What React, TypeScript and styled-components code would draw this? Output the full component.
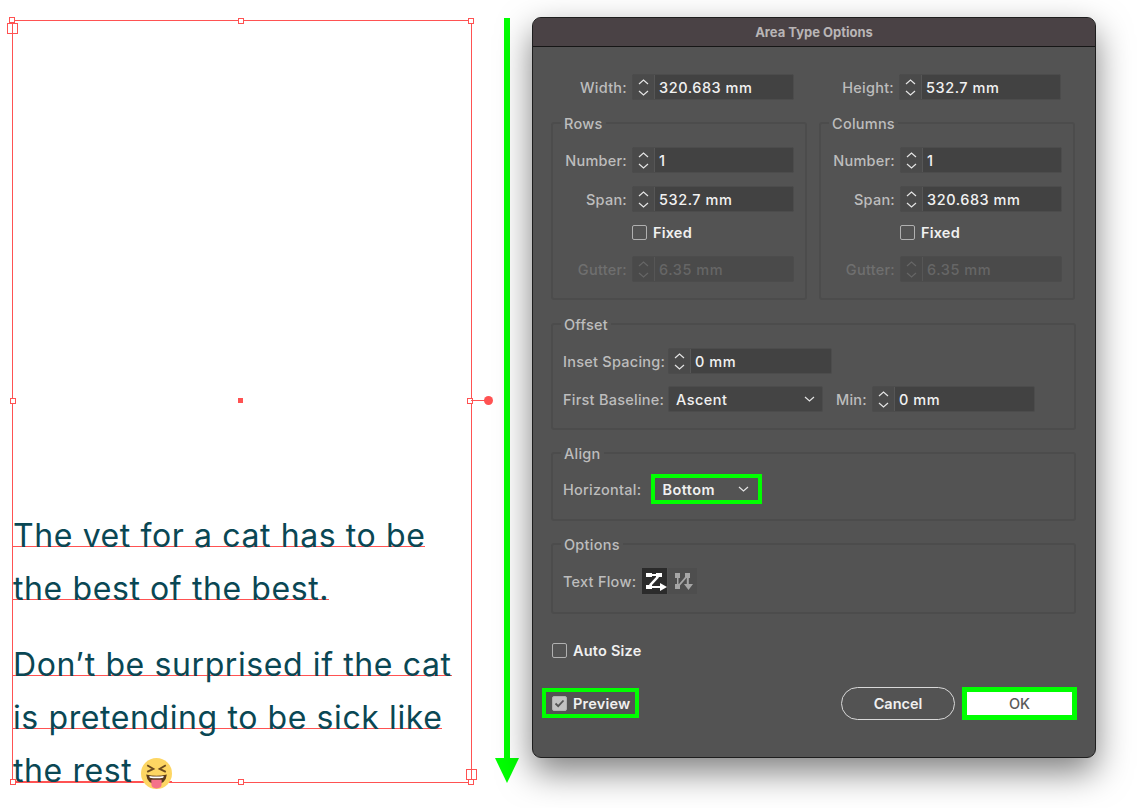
// global modules
import styled, { createGlobalStyle } from 'styled-components';

const GlobalStyle = createGlobalStyle`
  html, body {
    margin: 0;
    background: #fff;
  }
  body {
    font-family: Inter, "Liberation Sans", sans-serif;
  }
`;

const RED = '#ff5252';
const GREEN = '#00ff00';

const Page = styled.div`
  width: 1137px;
  height: 808px;
  display: flex;
  align-items: flex-start;
  overflow: hidden;
`;

/* artboard on the left */
const Frame = styled.div`
  position: relative;
  flex: none;
  box-sizing: border-box;
  width: 460px;
  height: 763px;
  margin: 20px 0 0 12px;
  border: 1px solid ${RED};
  display: flex;
  flex-direction: column;
  justify-content: flex-end;
  gap: 23px;
  color: #0a4754;
  font-size: 32px;
`;

const Paragraph = styled.div`
  display: flex;
  flex-direction: column;
  align-items: flex-start;
`;

const Line = styled.div`
  box-sizing: border-box;
  height: 53px;
  border-bottom: 1px solid ${RED};
  line-height: 84px;
  white-space: nowrap;
  letter-spacing: 0.6px;
`;

const Handle = styled.span<{ $x: number; $y: number; $size?: number; $fill?: boolean }>`
  position: absolute;
  box-sizing: border-box;
  left: ${(p) => p.$x}px;
  top: ${(p) => p.$y}px;
  width: ${(p) => p.$size ?? 6}px;
  height: ${(p) => p.$size ?? 6}px;
  border: 1px solid ${RED};
  background: ${(p) => (p.$fill ? RED : '#fff')};
`;

const Port = styled(Handle)`
  background: transparent;
`;

const Connector = styled.span`
  position: absolute;
  left: 458px;
  top: 379px;
  width: 14px;
  height: 1px;
  background: ${RED};
`;

const ConnectorDot = styled.span`
  position: absolute;
  left: 471px;
  top: 375px;
  width: 9px;
  height: 9px;
  border-radius: 50%;
  background: ${RED};
`;

const Arrow = styled.svg`
  flex: none;
  width: 26px;
  height: 766px;
  margin: 18px 0 0 22px;
`;

/* dialog */
const Dialog = styled.div`
  flex: none;
  box-sizing: border-box;
  width: 564px;
  height: 741px;
  margin: 17px 0 0 12px;
  border: 1px solid #1e1e1e;
  border-radius: 9px;
  background: #535353;
  box-shadow: 0 14px 34px rgba(0, 0, 0, 0.5);
  display: flex;
  flex-direction: column;
  overflow: hidden;
`;

const TitleBar = styled.div`
  flex: none;
  height: 28px;
  border-bottom: 1px solid #161616;
  background: #4a4245;
  color: #b9b5b6;
  font-size: 13px;
  font-weight: 700;
  line-height: 28px;
  text-align: center;
`;

const Body = styled.div`
  padding: 27px 19px 0 18px;
  display: flex;
  flex-direction: column;
`;

const TwoCols = styled.div`
  display: grid;
  grid-template-columns: 256px 256px;
  column-gap: 12px;
`;

const Group = styled.fieldset<{ $top?: number; $pad: string }>`
  box-sizing: border-box;
  min-width: 0;
  margin: ${(p) => p.$top ?? 0}px 0 0;
  padding: ${(p) => p.$pad};
  border: 2px solid #4c4c4c;
  border-radius: 3px;
`;

const Legend = styled.legend`
  height: 18px;
  margin-left: 8px;
  padding: 0 3px;
  color: #bdbdbd;
  font-size: 14.5px;
  font-weight: 500;
  line-height: 20px;
  letter-spacing: 0.25px;
`;

const Stack = styled.div<{ $gap: number }>`
  display: flex;
  flex-direction: column;
  gap: ${(p) => p.$gap}px;
`;

const Inset = styled.div`
  padding-left: 10px;
`;

const Row = styled.div<{ $gap?: number }>`
  display: flex;
  align-items: center;
  gap: ${(p) => p.$gap ?? 0}px;
`;

const Label = styled.label<{ $width?: number; $faded?: boolean; $left?: boolean }>`
  flex: none;
  width: ${(p) => (p.$width ? `${p.$width}px` : 'auto')};
  color: ${(p) => (p.$faded ? '#6f6f6f' : '#bdbdbd')};
  font-size: 14.5px;
  font-weight: 500;
  letter-spacing: 0.25px;
  text-align: ${(p) => (p.$left ? 'left' : 'right')};
  white-space: nowrap;
`;

const FieldBox = styled.div<{ $width: number; $faded?: boolean }>`
  flex: none;
  box-sizing: border-box;
  width: ${(p) => p.$width}px;
  height: 26px;
  margin-left: 5px;
  display: flex;
  border: 1px solid #4c4c4c;
  border-radius: 2px;
  background: ${(p) => (p.$faded ? '#4a4a4a' : '#424242')};
`;

const Stepper = styled.span`
  flex: none;
  width: 21px;
  border-right: 1px solid #565656;
  background: #4a4a4a;
  display: flex;
  flex-direction: column;
  align-items: center;
  justify-content: center;
  gap: 5px;
`;

const Value = styled.span<{ $faded?: boolean }>`
  padding-left: 4px;
  color: ${(p) => (p.$faded ? '#666' : '#f1f1f1')};
  font-size: 14.5px;
  font-weight: 500;
  line-height: 25px;
  letter-spacing: 0.55px;
  white-space: nowrap;
`;

const Dropdown = styled.div<{ $width: number }>`
  flex: none;
  box-sizing: border-box;
  width: ${(p) => p.$width}px;
  height: 26px;
  margin-left: 5px;
  padding: 0 7px;
  display: flex;
  align-items: center;
  justify-content: space-between;
  border: 1px solid #4c4c4c;
  border-radius: 2px;
  background: #444;
  color: #f1f1f1;
  font-size: 14.5px;
  font-weight: 500;
  letter-spacing: 0.45px;
`;

const GreenSelect = styled(Dropdown)`
  height: 30px;
  margin-left: 10px;
  padding: 0 9px 0 7px;
  border: 4px solid ${GREEN};
  border-radius: 0;
  background: #535353;
  font-weight: 600;
`;

const Box = styled.span<{ $checked?: boolean }>`
  flex: none;
  box-sizing: border-box;
  width: 15px;
  height: 15px;
  border: 1px solid #b0b0b0;
  border-radius: 2px;
  background: ${(p) => (p.$checked ? '#c2c2c2' : 'transparent')};
  display: flex;
  align-items: center;
  justify-content: center;
`;

const CheckLabel = styled.span`
  color: #f0f0f0;
  font-size: 14.5px;
  font-weight: 600;
  letter-spacing: 0.2px;
  white-space: nowrap;
`;

const FixedRow = styled(Row)`
  height: 20px;
  margin: -3px 0 1px 79px;
  gap: 6px;
`;

const FlowGroup = styled(Row)`
  margin-left: 6px;
  gap: 1px;
`;

const FlowButton = styled.span<{ $active?: boolean }>`
  flex: none;
  width: ${(p) => (p.$active ? 25 : 29)}px;
  height: 26px;
  background: ${(p) => (p.$active ? '#2b2b2b' : '#4e4e4e')};
  display: flex;
`;

const AutoSize = styled(Row)`
  height: 18px;
  margin: 27px 0 0 1px;
  gap: 6px;
`;

const Footer = styled.div`
  margin-top: 28px;
  margin-right: -1px;
  display: flex;
  align-items: flex-start;
  justify-content: space-between;
`;

const PreviewBox = styled(Row)`
  box-sizing: border-box;
  width: 97px;
  height: 30px;
  margin: 1px 0 0 -9px;
  padding-left: 6px;
  gap: 6px;
  border: 4px solid ${GREEN};
`;

const Buttons = styled.div`
  display: flex;
  gap: 7px;
`;

const CancelButton = styled.button`
  box-sizing: border-box;
  width: 114px;
  height: 33px;
  padding: 0;
  border: 1px solid #d8d8d8;
  border-radius: 17px;
  background: transparent;
  color: #f0f0f0;
  font: 600 14.5px Inter, "Liberation Sans", sans-serif;
`;

const OkButton = styled.button`
  box-sizing: border-box;
  width: 115px;
  height: 33px;
  padding: 0;
  border: 5px solid ${GREEN};
  background: #fff;
  color: #5a5a5a;
  font: 500 14.5px Inter, "Liberation Sans", sans-serif;
`;

const Chevron = ({ up, color = '#e4e4e4' }: { up?: boolean; color?: string }) => (
  <svg width="11" height="6" viewBox="0 0 11 6" fill="none">
    <path
      d={up ? 'M1 5 L5.5 1 L10 5' : 'M1 1 L5.5 5 L10 1'}
      stroke={color}
      strokeWidth="1.2"
    />
  </svg>
);

interface FieldProps {
  label: string;
  value: string;
  labelWidth: number;
  width: number;
  faded?: boolean;
  left?: boolean;
}

const Field = ({ label, value, labelWidth, width, faded, left }: FieldProps) => (
  <Row>
    <Label $width={labelWidth} $faded={faded} $left={left}>
      {label}
    </Label>
    <FieldBox $width={width} $faded={faded}>
      <Stepper>
        <Chevron up color={faded ? '#666' : undefined} />
        <Chevron color={faded ? '#666' : undefined} />
      </Stepper>
      <Value $faded={faded}>{value}</Value>
    </FieldBox>
  </Row>
);

const DimensionGroup = ({ title, span }: { title: string; span: string }) => (
  <Group $top={14} $pad="15px 0 16px 0">
    <Legend>{title}</Legend>
    <Stack $gap={13}>
      <Field label="Number:" value="1" labelWidth={74} width={162} />
      <Field label="Span:" value={span} labelWidth={74} width={162} />
      <FixedRow>
        <Box />
        <CheckLabel>Fixed</CheckLabel>
      </FixedRow>
      <Field label="Gutter:" value="6.35 mm" labelWidth={74} width={162} faded />
    </Stack>
  </Group>
);

const TongueEmoji = () => (
  <svg
    width="31"
    height="31"
    viewBox="0 0 30 30"
    style={{ verticalAlign: '-7px', marginLeft: '-1px' }}
  >
    <circle cx="15" cy="15" r="15" fill="#fdd663" />
    <path
      d="M6 7 L12 10.5 L6 13.5 M24 7 L18 10.5 L24 13.5"
      fill="none"
      stroke="#6b4a1e"
      strokeWidth="1.8"
    />
    <path d="M5 16 Q15 18.5 25 16 Q24 25 15 25.5 Q6 25 5 16 Z" fill="#5a3a1a" />
    <path d="M8 17.4 Q15 18.6 22 17.4 L21.5 19 Q15 20 8.5 19 Z" fill="#fff" />
    <path d="M10 21 H20 V25 Q20 29.5 15 29.5 Q10 29.5 10 25 Z" fill="#f4728a" />
  </svg>
);

const FlowAcross = () => (
  <svg width="25" height="26" viewBox="0 0 25 26" fill="#fff">
    <rect x="4" y="5" width="6" height="4" />
    <rect x="14" y="5" width="6" height="4" />
    <rect x="10" y="6" width="4" height="2" />
    <path d="M15 8 L17 9.5 L9 18 L7 16.5 Z" />
    <rect x="4" y="17" width="6" height="4" />
    <rect x="10" y="18" width="9" height="2" />
    <path d="M18 15 L25 19 L18 23 Z" />
  </svg>
);

const FlowDown = () => (
  <svg width="29" height="26" viewBox="0 0 29 26" fill="#a6a6a6">
    <rect x="7" y="5" width="5" height="5" />
    <rect x="9" y="10" width="1.5" height="6" />
    <rect x="7" y="16" width="5" height="5" />
    <path d="M11 16 L17 9 L18.5 10 L12 17.5 Z" />
    <rect x="17" y="5" width="5" height="5" />
    <rect x="18.8" y="10" width="2" height="6" />
    <path d="M16 16 H25 L20.5 22 Z" />
  </svg>
);

export default function App() {
  return (
    <Page>
      <GlobalStyle />

      <Frame>
        <Paragraph>
          <Line>The vet for a cat has to be</Line>
          <Line>the best of the best.</Line>
        </Paragraph>
        <Paragraph>
          <Line>Don’t be surprised if the cat</Line>
          <Line>is pretending to be sick like</Line>
          <Line>
            the rest <TongueEmoji />
          </Line>
        </Paragraph>

        <Handle $x={-4} $y={-4} />
        <Handle $x={225} $y={-3} />
        <Handle $x={455} $y={-3} />
        <Handle $x={-3} $y={377} />
        <Handle $x={225} $y={377} $size={5} $fill />
        <Handle $x={454} $y={377} />
        <Handle $x={-3} $y={758} />
        <Handle $x={225} $y={758} />
        <Handle $x={455} $y={758} />
        <Port $x={-6} $y={2} $size={11} />
        <Port $x={453} $y={748} $size={11} />
        <Connector />
        <ConnectorDot />
      </Frame>

      <Arrow viewBox="0 0 26 766">
        <rect x="10" y="0" width="6" height="742" fill={GREEN} />
        <path d="M1 740 H25 L13 765 Z" fill={GREEN} />
      </Arrow>

      <Dialog>
        <TitleBar>Area Type Options</TitleBar>
        <Body>
          <TwoCols>
            <Field label="Width:" value="320.683 mm" labelWidth={76} width={162} />
            <Field label="Height:" value="532.7 mm" labelWidth={75} width={162} />
          </TwoCols>

          <TwoCols>
            <DimensionGroup title="Rows" span="532.7 mm" />
            <DimensionGroup title="Columns" span="320.683 mm" />
          </TwoCols>

          <Group $top={15} $pad="15px 0 16px">
            <Legend>Offset</Legend>
            <Inset>
              <Stack $gap={12}>
                <Field label="Inset Spacing:" value="0 mm" labelWidth={100} width={164} left />
                <Row>
                  <Label $width={100} $left>
                    First Baseline:
                  </Label>
                  <Dropdown $width={155}>
                    Ascent
                    <Chevron />
                  </Dropdown>
                  <Label $width={44}>Min:</Label>
                  <FieldBox $width={163}>
                    <Stepper>
                      <Chevron up />
                      <Chevron />
                    </Stepper>
                    <Value>0 mm</Value>
                  </FieldBox>
                </Row>
              </Stack>
            </Inset>
          </Group>

          <Group $top={14} $pad="12px 0 15px">
            <Legend>Align</Legend>
            <Inset>
              <Row>
                <Label $left>Horizontal:</Label>
                <GreenSelect $width={111}>
                  Bottom
                  <Chevron />
                </GreenSelect>
              </Row>
            </Inset>
          </Group>

          <Group $top={14} $pad="15px 0 18px">
            <Legend>Options</Legend>
            <Inset>
              <Row>
                <Label $left>Text Flow:</Label>
                <FlowGroup>
                  <FlowButton $active>
                    <FlowAcross />
                  </FlowButton>
                  <FlowButton>
                    <FlowDown />
                  </FlowButton>
                </FlowGroup>
              </Row>
            </Inset>
          </Group>

          <AutoSize>
            <Box />
            <CheckLabel>Auto Size</CheckLabel>
          </AutoSize>

          <Footer>
            <PreviewBox>
              <Box $checked>
                <svg width="11" height="9" viewBox="0 0 11 9" fill="none">
                  <path d="M1.5 4.5 L4.2 7.2 L9.5 1.5" stroke="#555" strokeWidth="1.8" />
                </svg>
              </Box>
              <CheckLabel>Preview</CheckLabel>
            </PreviewBox>
            <Buttons>
              <CancelButton>Cancel</CancelButton>
              <OkButton>OK</OkButton>
            </Buttons>
          </Footer>
        </Body>
      </Dialog>
    </Page>
  );
}
